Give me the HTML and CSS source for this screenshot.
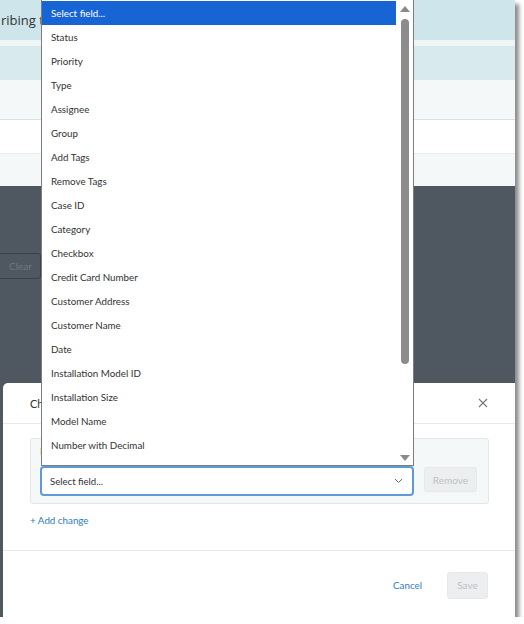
FILE: index.html
```html
<!DOCTYPE html>
<html lang="en">
<head>
    <meta charset="UTF-8">
    <title>Change fields</title>
    <link rel="stylesheet" href="styles.css">
</head>
<body>
    <div class="frame">
        <div class="page">
            <div class="topbar">ribing to</div>
            <div class="gap"></div>
            <div class="band"></div>
            <div class="row row1"></div>
            <div class="row row2"></div>
            <div class="row row3"></div>
            <div class="backdrop">
                <button class="clear">Clear</button>
            </div>
        </div>

        <div class="modal">
            <div class="modal-head">
                <span class="title">Change fields</span>
                <svg class="close" width="10" height="10" viewBox="0 0 10 10"><path d="M1 1l8 8M9 1l-8 8" stroke="#777" stroke-width="1.1" fill="none"/></svg>
            </div>
            <div class="modal-body">
                <div class="change-box">
                    <div class="label">Field</div>
                    <div class="change-row">
                        <div class="select">
                            <span>Select field...</span>
                            <svg width="9" height="6" viewBox="0 0 9 6"><path d="M1 1l3.5 3.5L8 1" stroke="#666" stroke-width="1" fill="none"/></svg>
                        </div>
                        <button class="btn-disabled remove">Remove</button>
                    </div>
                </div>
                <a class="add-link">+ Add change</a>
            </div>
            <div class="modal-foot">
                <a class="cancel">Cancel</a>
                <button class="btn-disabled save">Save</button>
            </div>
        </div>

        <div class="dropdown">
            <ul class="options">
                <li class="active">Select field...</li>
                <li>Status</li>
                <li>Priority</li>
                <li>Type</li>
                <li>Assignee</li>
                <li>Group</li>
                <li>Add Tags</li>
                <li>Remove Tags</li>
                <li>Case ID</li>
                <li>Category</li>
                <li>Checkbox</li>
                <li>Credit Card Number</li>
                <li>Customer Address</li>
                <li>Customer Name</li>
                <li>Date</li>
                <li>Installation Model ID</li>
                <li>Installation Size</li>
                <li>Model Name</li>
                <li>Number with Decimal</li>
                <li>Order Type</li>
            </ul>
            <div class="scrollbar">
                <svg width="12" height="8" viewBox="0 0 12 8"><path d="M6 1l5 6H1z" fill="#8a8a8a"/></svg>
                <div class="thumb"></div>
                <svg width="12" height="8" viewBox="0 0 12 8"><path d="M6 7l5-6H1z" fill="#8a8a8a"/></svg>
            </div>
        </div>
    </div>
</body>
</html>
```

FILE: styles.css
```css
body {
    margin: 0;
    background: #fff;
    font-family: Lato, "Open Sans", Arial, sans-serif;
    color: #333;
}
.frame {
    position: relative;
    width: 515px;
    height: 617px;
    overflow: hidden;
    background: #4f5760;
    box-shadow: 4px 4px 4px rgba(0, 0, 0, 0.45);
}

/* page behind the modal */
.topbar {
    height: 40px;
    line-height: 40px;
    background: #cde5eb;
    font-family: "Open Sans", Arial, sans-serif;
    font-size: 13px;
    padding-left: 1px;
}
.gap {
    height: 6px;
    background: #eef6f8;
}
.band {
    height: 34px;
    background: #d9eaef;
}
.row1 {
    height: 39px;
    background: #f4f8f9;
    border-bottom: 1px solid #d3e5eb;
}
.row2 {
    height: 33px;
    background: #fff;
    border-bottom: 1px solid #e6ebed;
}
.row3 {
    height: 32px;
    background: #f5f8f9;
}
.backdrop {
    padding-top: 67px;
}
.clear {
    display: block;
    width: 51px;
    height: 26px;
    margin-left: -10px;
    background: #4f5760;
    border: 1px solid #3a4148;
    border-radius: 3px;
    color: #6c777f;
    font-family: inherit;
    font-size: 10px;
    text-align: left;
    padding: 0 0 0 18px;
}

/* modal */
.modal {
    position: absolute;
    left: 3px;
    top: 383px;
    right: 0;
    bottom: 0;
    background: #fff;
    border-radius: 5px 0 0 0;
    display: flex;
    flex-direction: column;
}
.modal-head {
    height: 40px;
    border-bottom: 1px solid #e6eaec;
    display: flex;
    align-items: center;
    justify-content: space-between;
    padding: 0 27px;
}
.title {
    font-size: 11px;
    color: #333;
}
.modal-body {
    padding: 14px 0 0 27px;
    height: 112px;
    border-bottom: 1px solid #e6eaec;
}
.change-box {
    width: 459px;
    box-sizing: border-box;
    background: #f5f8f9;
    border: 1px solid #e2e6e9;
    border-radius: 3px;
    padding: 6px 11px 7px 9px;
}
.label {
    font-size: 10px;
    height: 21px;
    color: #555;
}
.change-row {
    display: flex;
    gap: 10px;
    align-items: flex-start;
}
.select {
    flex: none;
    width: 374px;
    height: 30px;
    box-sizing: border-box;
    border: 2px solid #5d9ad6;
    border-radius: 4px;
    background: #fff;
    display: flex;
    align-items: center;
    justify-content: space-between;
    padding: 0 9px 0 8px;
    font-size: 9.6px;
}
.btn-disabled {
    flex: none;
    background: #eceeef;
    border: 1px solid #e6e8ea;
    border-radius: 3px;
    color: #bcc2c6;
    font-family: inherit;
    font-size: 10px;
    padding: 0;
}
.remove {
    width: 53px;
    height: 25px;
    margin-top: 1px;
}
.add-link {
    display: block;
    margin-top: 10px;
    font-size: 9.8px;
    color: #2f7cc0;
}
.modal-foot {
    flex: 1;
    display: flex;
    align-items: center;
    justify-content: flex-end;
    padding: 2px 27px 0 0;
}
.cancel {
    font-size: 9.8px;
    color: #2f7cc0;
    margin-right: 25px;
}
.save {
    width: 41px;
    height: 27px;
}

/* native select popup */
.dropdown {
    position: absolute;
    left: 41px;
    top: 0;
    width: 371px;
    height: 465px;
    background: #fff;
    border: 1px solid #7d7d7d;
    border-top: none;
    display: flex;
}
.options {
    list-style: none;
    margin: 0;
    padding: 1px 0 0 0;
    flex: 1;
    overflow: hidden;
}
.options li {
    height: 24px;
    line-height: 24px;
    padding-left: 9px;
    font-size: 9.8px;
    color: #333;
}
.options li.active {
    background: #1764d4;
    color: #fff;
}
.scrollbar {
    width: 17px;
    display: flex;
    flex-direction: column;
    align-items: center;
    padding: 5px 0 3px;
}
.thumb {
    width: 8px;
    height: 345px;
    margin: 6px 0 auto;
    border-radius: 4px;
    background: #8c8c8c;
}
```
